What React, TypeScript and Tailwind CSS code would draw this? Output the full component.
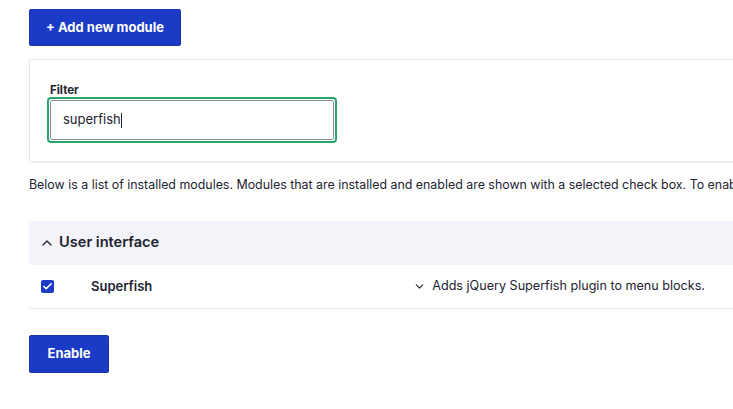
import { ChevronUp, ChevronDown, Check } from 'lucide-react'

export default function App() {
  return (
    <div className="w-[733px] h-[409px] overflow-hidden bg-white text-[#222330]" style={{ fontFamily: 'Inter, "Liberation Sans", sans-serif' }}>
      <div className="w-[800px] pl-[29px] pt-[9px]">
        {/* Add button */}
        <button className="h-[37px] w-[152px] rounded-[2px] bg-[#1b3ac6] border border-[#1a33a8] text-white text-[13px] font-bold flex items-center justify-center">
          + Add new module
        </button>

        {/* Filter card */}
        <div className="mt-[13px] h-[103px] border border-[#e6e7ec] rounded-[2px] shadow-[0_1px_2px_rgba(0,0,0,0.06)] pl-[17px] pt-[24px]">
          <label className="block text-[11.5px] font-bold leading-[13px] ml-[3px]">Filter</label>
          <div className="w-[290px] h-[46px] rounded-[4px] border-2 border-[#26a769] p-px">
            <div className="h-full border border-[#8e929c] rounded-[2px] flex items-center pl-[12px] text-[13px]">
              superfish<span className="w-px h-[15px] bg-[#222330]" />
            </div>
          </div>
        </div>

        {/* Description */}
        <p className="mt-[15px] text-[12.4px] leading-[16px] whitespace-nowrap text-[#222330]">
          Below is a list of installed modules. Modules that are installed and enabled are shown with a selected check box. To enable a module, check the box and click Enable.
        </p>

        {/* Section */}
        <div className="mt-[28px]">
          <div className="h-[44px] bg-[#f3f4f9] flex items-center pl-[10px]">
            <ChevronUp size={16} strokeWidth={2} className="text-[#222330]" />
            <span className="ml-[4px] text-[14.6px] font-semibold">User interface</span>
          </div>
          <div className="h-[44px] border-b border-[#e6e7ec] flex items-center">
            <div className="ml-[12px] w-[13px] h-[13px] rounded-[2px] bg-[#1b3ac6] flex items-center justify-center">
              <Check size={11} strokeWidth={3.5} className="text-white" />
            </div>
            <span className="ml-[37px] text-[13px] font-semibold">Superfish</span>
            <ChevronDown size={13} strokeWidth={2} className="ml-[261px] text-[#222330]" />
            <span className="ml-[6px] text-[12.6px]">Adds jQuery Superfish plugin to menu blocks.</span>
          </div>
        </div>

        {/* Enable */}
        <button className="mt-[26px] h-[38px] w-[80px] rounded-[2px] bg-[#1b3ac6] border border-[#1a33a8] text-white text-[13px] font-bold flex items-center justify-center">
          Enable
        </button>
      </div>
    </div>
  )
}
